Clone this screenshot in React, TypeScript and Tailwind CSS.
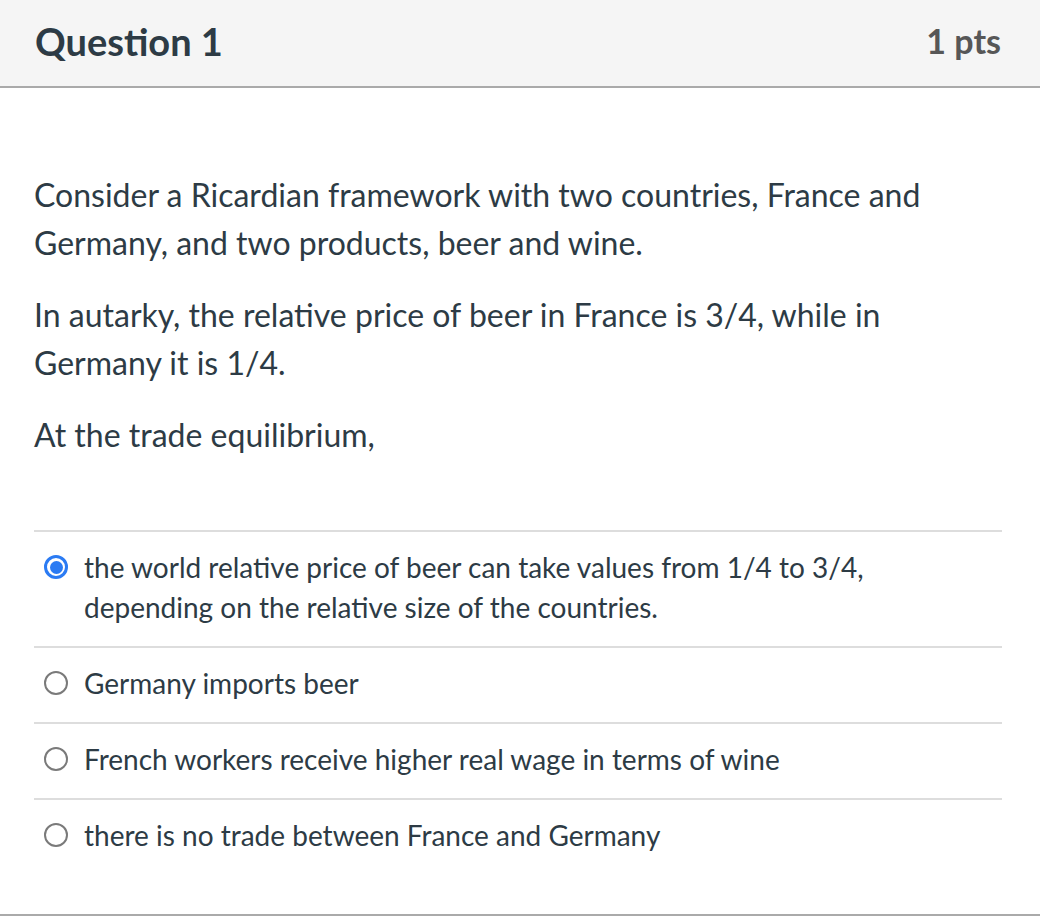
import React, { useState } from "react";

const options = [
  "the world relative price of beer can take values from 1/4 to 3/4, depending on the relative size of the countries.",
  "Germany imports beer",
  "French workers receive higher real wage in terms of wine",
  "there is no trade between France and Germany",
];

const Radio = ({ checked }: { checked: boolean }) =>
  checked ? (
    <span className="flex h-[24px] w-[24px] shrink-0 items-center justify-center rounded-full border-[3px] border-[#2b7bf3] bg-white">
      <span className="h-[13px] w-[13px] rounded-full bg-[#2b7bf3]" />
    </span>
  ) : (
    <span className="h-[24px] w-[24px] shrink-0 rounded-full border-2 border-[#7a7a7a] bg-white" />
  );

export default function App() {
  const [selected, setSelected] = useState(0);
  return (
    <div className="w-[1040px] h-[920px] bg-white text-[#2d3b45]" style={{ fontFamily: "Lato, 'Open Sans', sans-serif" }}>
      <div className="flex h-[88px] items-center justify-between border-b-2 border-[#aaaaaa] bg-[#f5f5f5] pb-[4px] pl-[35px] pr-[39px]">
        <h2 className="text-[38px] font-bold leading-none">Question 1</h2>
        <span className="text-[34px] font-bold leading-none text-[#575757]">1 pts</span>
      </div>
      <div className="border-b-2 border-[#aaaaaa] pl-[34px] pr-[38px] pt-[83px] pb-[40px]">
        <div className="space-y-[24px] pr-[40px] text-[32px] leading-[48px]">
          <p>Consider a Ricardian framework with two countries, France and Germany, and two products, beer and wine.</p>
          <p>In autarky, the relative price of beer in France is 3/4, while in Germany it is 1/4.</p>
          <p>At the trade equilibrium,</p>
        </div>
        <div className="mt-[71px]">
          {options.map((opt, i) => (
            <label
              key={i}
              onClick={() => setSelected(i)}
              className="flex cursor-pointer items-start border-t-2 border-[#dddddd] pl-[10px] pt-[15px] pb-[19px]"
            >
              <span className="flex h-[40px] items-center">
                <Radio checked={selected === i} />
              </span>
              <span className="ml-[16px] pr-[100px] text-[28px] leading-[40px]">{opt}</span>
            </label>
          ))}
        </div>
      </div>
    </div>
  );
}
